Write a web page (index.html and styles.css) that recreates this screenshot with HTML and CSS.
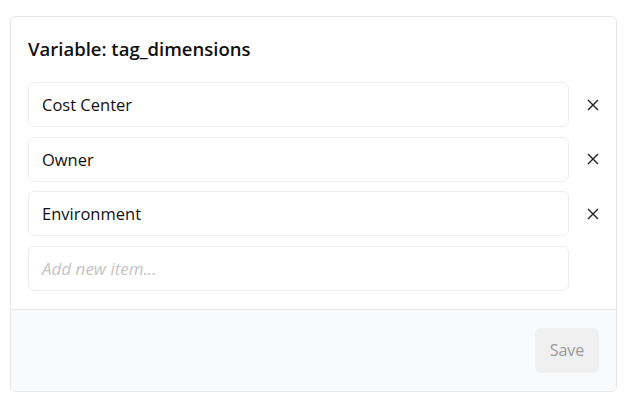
FILE: index.html
```html
<!DOCTYPE html>
<html lang="en">
<head>
<meta charset="utf-8">
<title>Variable: tag_dimensions</title>
<link rel="stylesheet" href="styles.css">
</head>
<body>
<div class="card">
  <div class="card-body">
    <h2 class="title">Variable: tag_dimensions</h2>
    <div class="list">
      <div class="row">
        <div class="field">Cost Center</div>
        <button class="remove" aria-label="Remove"><svg viewBox="0 0 12 12" width="12" height="12"><path d="M1 1L11 11M11 1L1 11" stroke="#1f1f24" stroke-width="1.4" fill="none"/></svg></button>
      </div>
      <div class="row">
        <div class="field">Owner</div>
        <button class="remove" aria-label="Remove"><svg viewBox="0 0 12 12" width="12" height="12"><path d="M1 1L11 11M11 1L1 11" stroke="#1f1f24" stroke-width="1.4" fill="none"/></svg></button>
      </div>
      <div class="row">
        <div class="field">Environment</div>
        <button class="remove" aria-label="Remove"><svg viewBox="0 0 12 12" width="12" height="12"><path d="M1 1L11 11M11 1L1 11" stroke="#1f1f24" stroke-width="1.4" fill="none"/></svg></button>
      </div>
      <div class="row">
        <div class="field placeholder">Add new item...</div>
        <span class="remove-spacer"></span>
      </div>
    </div>
  </div>
  <div class="card-footer">
    <button class="save">Save</button>
  </div>
</div>
</body>
</html>
```
FILE: styles.css
```css
html, body {
  margin: 0;
  padding: 0;
  background: #ffffff;
}
body {
  padding: 16px 12px 0 10px;
  font-family: "Open Sans", "Noto Sans", sans-serif;
  color: #111111;
}
.card {
  width: 607px;
  box-sizing: border-box;
  border: 1px solid #e6e6e6;
  border-radius: 6px;
  background: #ffffff;
  overflow: hidden;
}
.card-body {
  padding: 18px 18px 18px 17px;
}
.title {
  margin: 0 0 19px 0;
  font-size: 18.5px;
  line-height: 28px;
  font-weight: 600;
  color: #111111;
}
.list {
  display: flex;
  flex-direction: column;
  gap: 9.6px;
}
.row {
  display: flex;
  align-items: center;
  gap: 18px;
}
.field {
  flex: 1;
  height: 45px;
  box-sizing: border-box;
  border: 1px solid #ededed;
  border-radius: 6px;
  padding: 0 13px;
  display: flex;
  align-items: center;
  font-size: 16.5px;
  color: #111111;
}
.placeholder {
  font-style: italic;
  font-size: 17px;
  color: #c4c4c4;
}
.remove {
  width: 11px;
  height: 12px;
  padding: 0;
  border: 0;
  background: none;
  display: flex;
  align-items: center;
  justify-content: center;
  overflow: visible;
}
.remove svg {
  display: block;
  flex: none;
}
.remove-spacer {
  width: 11px;
}
.card-footer {
  border-top: 1px solid #e8e8e8;
  background: #f9fafb;
  padding: 18px 17px 18px 18px;
  display: flex;
  justify-content: flex-end;
}
.save {
  width: 64px;
  height: 45px;
  border: 0;
  border-radius: 6px;
  background: #f0f0f0;
  color: #9a9a9a;
  font-family: "Open Sans", "Noto Sans", sans-serif;
  font-size: 16px;
  padding: 0;
}
```
